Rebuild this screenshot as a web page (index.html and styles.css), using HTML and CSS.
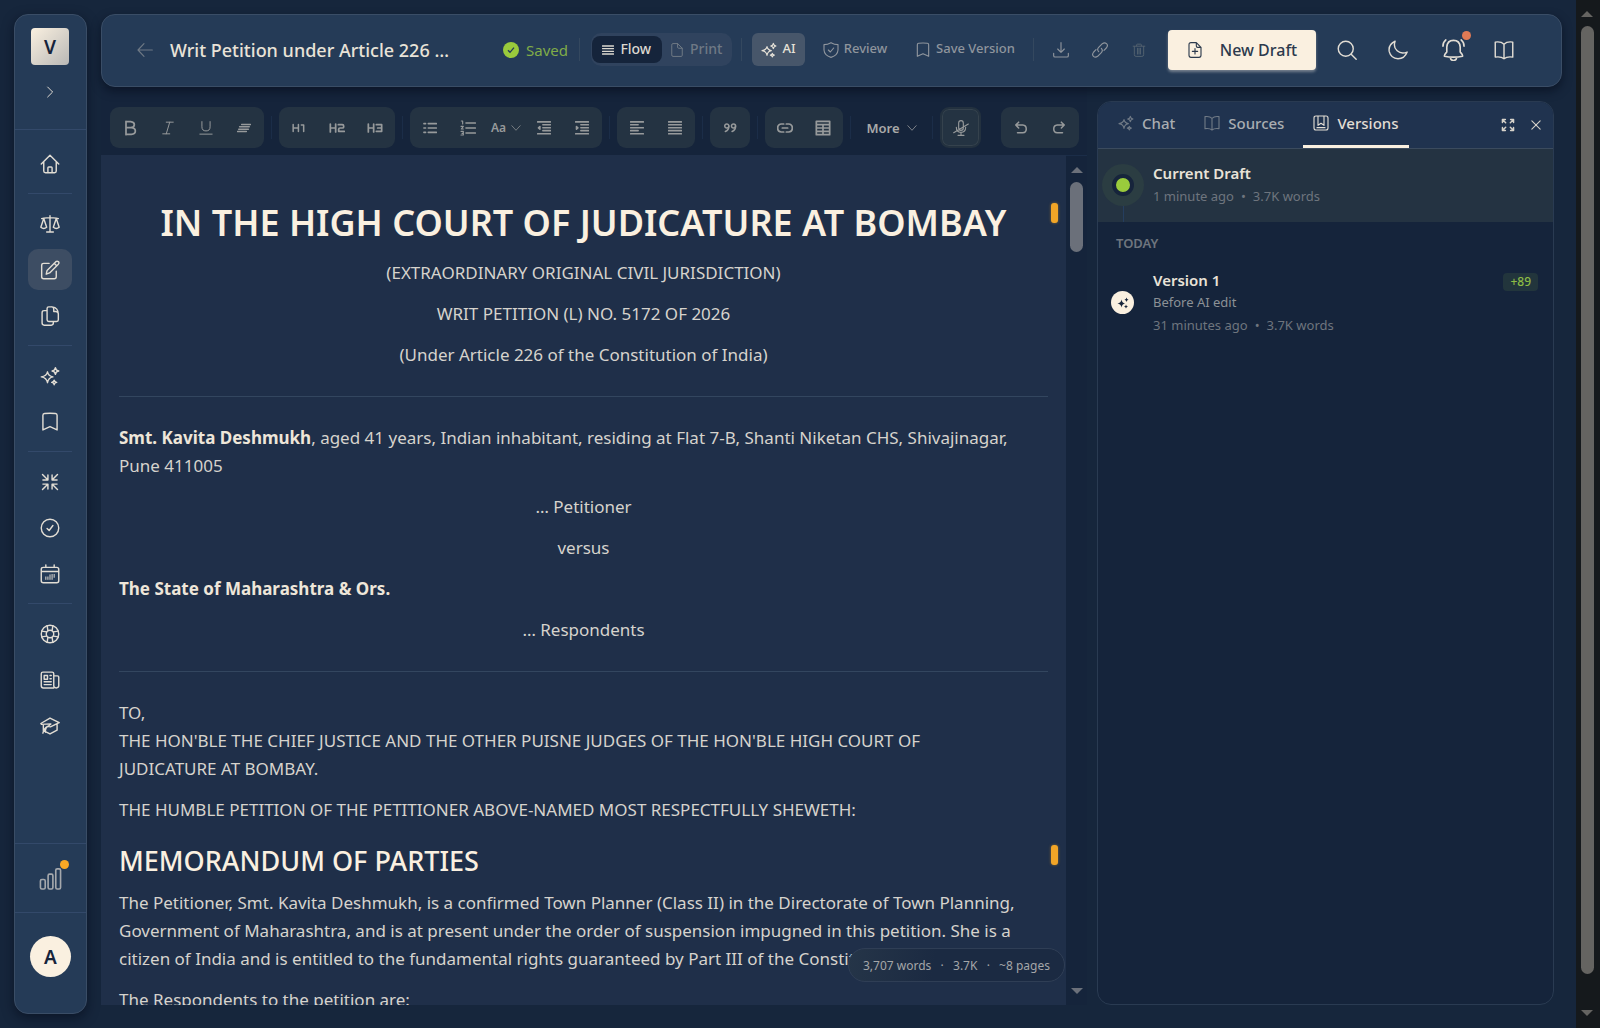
FILE: index.html
```html
<!DOCTYPE html>
<html lang="en">
<head>
<meta charset="utf-8">
<meta name="viewport" content="width=device-width, initial-scale=1">
<title>Writ Petition under Article 226</title>
<link rel="stylesheet" href="styles.css">
</head>
<body>
<svg class="sprite" aria-hidden="true">
  <symbol id="i-home" viewBox="0 0 24 24"><path d="M1.5 12 12 1.500 22.500 12M4.500 9.500V20.500Q4.500 22.500 6.500 22.500H17.500Q19.500 22.500 19.500 20.500V9.500M9.500 22V16.500Q9.500 15.500 10.500 15.500H13.500Q14.500 15.500 14.500 16.500V22"/></symbol>
  <symbol id="i-scale" viewBox="0 0 24 24"><path d="M12 2V21M8 21.500H16M2 5.500C6 4 9 5 12 4.500C15 5 18 4 22 5.500M4.500 5.500 1 16Q4.500 19 8 16ZM19.500 5.500 16 16Q19.500 19 23 16Z"/></symbol>
  <symbol id="i-edit" viewBox="0 0 24 24"><path d="M11 4H4.500Q2 4 2 6.500V20Q2 22.500 4.500 22.500H17Q19.500 22.500 19.500 20V13.500M7.500 17 8.500 12.500 19 2Q20.500 .800 22 2T22 5L11.500 15.500ZM17 4 20 7"/></symbol>
  <symbol id="i-docs" viewBox="0 0 24 24"><path d="M8.500 5.500H5Q2.500 5.500 2.500 8V20.500Q2.500 23 5 23H13.500Q16 23 16 20.500V18.500M8.500 3Q8.500 1 10.500 1H14.500Q22 2 22 10V16.500Q22 18.500 20 18.500H10.500Q8.500 18.500 8.500 16.500ZM14.500 1Q16.500 1.500 16.500 4V6.500H19Q21.500 6.500 22 9"/></symbol>
  <symbol id="i-spark" viewBox="0 0 24 24"><path d="M9 7Q10 12 15.500 13Q10 14 9 20Q8 14 1.500 13Q8 12 9 7ZM18.500 2Q19 5.500 22.500 6Q19 6.500 18.500 10Q18 6.500 14.500 6Q18 5.500 18.500 2ZM17 17Q17.300 19.200 20 19.700Q17.300 20.200 17 22.500Q16.700 20.200 14 19.700Q16.700 19.200 17 17Z"/></symbol>
  <symbol id="i-bookmark" viewBox="0 0 24 24"><path d="M3.500 21.500V4Q3.500 2 5.500 1.800 12 1.300 18.500 1.800 20.500 2 20.500 4V21.500L12 17.500Z"/></symbol>
  <symbol id="i-compress" viewBox="0 0 24 24"><path d="M3 3 9 9M9.500 3.500V9.500H3.500M21 3 15 9M14.500 3.500V9.500H20.500M3 21 9 15M9.500 20.500V14.500H3.500M21 21 15 15M14.500 20.500V14.500H20.500"/></symbol>
  <symbol id="i-expand" viewBox="0 0 24 24"><path d="M8 8 3 3M2.500 7.500V2.500H7.500M16 8 21 3M16.500 2.500H21.500V7.500M8 16 3 21M2.500 16.500V21.500H7.500M16 16 21 21M16.500 21.500H21.500V16.500"/></symbol>
  <symbol id="i-check" viewBox="0 0 24 24"><circle cx="12" cy="12" r="10.500"/><path d="M8.500 12.500 11 15 15.500 9"/></symbol>
  <symbol id="i-calendar" viewBox="0 0 24 24"><path d="M4 4H20Q22.500 4 22.500 6.500V20Q22.500 22.500 20 22.500H4Q1.500 22.500 1.500 20V6.500Q1.500 4 4 4ZM7 1V4M17 1V4M1.500 9H22.500"/><path stroke-width="1.200" d="M7 18.500V15.500M9.500 18.500V15.500M12 18.500V13M14.500 18.500V12.500M17 16V12.500"/></symbol>
  <symbol id="i-life" viewBox="0 0 24 24"><circle cx="12" cy="12" r="10.500"/><circle cx="12" cy="12" r="4.500"/><path d="M8.500 2 9.500 8M15.500 2 14.500 8M8.500 22 9.500 16M15.500 22 14.500 16M2 8.500 8 9.500M2 15.500 8 14.500M22 8.500 16 9.500M22 15.500 16 14.500"/></symbol>
  <symbol id="i-news" viewBox="0 0 24 24"><path d="M16.500 21.500H4Q1.500 21.500 1.500 19V4.500Q1.500 2.500 3.500 2.500H14.500Q16.500 2.500 16.500 4.500V19Q16.500 21.500 19.500 21.500T22.500 19V8.500Q22.500 7 21 7H16.500M5 6.500H9V11H5ZM12 6.500H13.500M12 10.500H13.500M5 14H13.500M5 17.500H13.500"/></symbol>
  <symbol id="i-cap" viewBox="0 0 24 24"><path d="M1 9 12 2.500 23 8 12.500 13 9.500 12.500 13 9.500 1.500 10M4 11V17.500L12 21.500 20.500 17V10M6.500 19.500Q6 14.500 9 12.500M3.500 20.500Q4.500 15 9 12.500"/></symbol>
  <symbol id="i-bars" viewBox="0 0 24 24"><path d="M1.500 14.500Q1.500 13 3 13H5Q6.500 13 6.500 14.500V21.500Q6.500 23 5 23H3Q1.500 23 1.500 21.500ZM9.500 9Q9.500 7.500 11 7.500H13Q14.500 7.500 14.500 9V21.500Q14.500 23 13 23H11Q9.500 23 9.500 21.500ZM17.500 3.500Q17.500 2 19 2H21Q22.500 2 22.500 3.500V21.500Q22.500 23 21 23H19Q17.500 23 17.500 21.500Z"/></symbol>
  <symbol id="i-right" viewBox="0 0 24 24"><path d="M8 3.500 16.500 12 8 20.500"/></symbol>
  <symbol id="i-down" viewBox="0 0 24 24"><path d="M2 6.500 12 17.500 22 6.500"/></symbol>
  <symbol id="i-back" viewBox="0 0 24 24"><path d="M23 12H1.500M10.500 2.500 1.500 12 10.500 21.500"/></symbol>
  <symbol id="i-lines" viewBox="0 0 24 24"><path d="M1 4H23M1 9.300H23M1 14.700H23M1 20H23"/></symbol>
  <symbol id="i-page" viewBox="0 0 24 24"><path d="M3 3Q3 1 5 1H13L21 9V21Q21 23 19 23H5Q3 23 3 21ZM13 1V7Q13 9 15 9H21"/></symbol>
  <symbol id="i-pageplus" viewBox="0 0 24 24"><path d="M3 4Q3 1 6 1H14L21 8V20Q21 23 18 23H6Q3 23 3 20ZM14 1V6Q14 8 16 8H21M12 10V18M8 14H16"/></symbol>
  <symbol id="i-shield" viewBox="0 0 24 24"><path d="M12 1Q17 4 22.500 4V12Q22 20 12 23Q2 20 1.500 12V4Q7 4 12 1ZM8 12 11 15 16 9"/></symbol>
  <symbol id="i-download" viewBox="0 0 24 24"><path d="M12 1V15.500M7 10.500 12 15.500 17 10.500M1 17V20.500Q1 22.500 3 22.500H21Q23 22.500 23 20.500V17"/></symbol>
  <symbol id="i-link" viewBox="0 0 24 24"><path d="M10 14.500Q7 11 10 8L15.500 2.500Q19 0 21.800 2.500T21.500 9L18 12.500M14 9.500Q17 13 14 16L8.500 21.500Q5 24 2.200 21.500T2.500 15L6 11.500"/></symbol>
  <symbol id="i-trash" viewBox="0 0 24 24"><path d="M2 5.500H22M8 5V3Q8 2 9 2H15Q16 2 16 3V5M4 6V20Q4 23 7 23H17Q20 23 20 20V6M9.500 9V19M14.500 9V19M12 9V19"/></symbol>
  <symbol id="i-search" viewBox="0 0 24 24"><circle cx="10.500" cy="10.500" r="9"/><path d="M17 17 23 23"/></symbol>
  <symbol id="i-moon" viewBox="0 0 24 24"><path d="M8.500 1.500Q0 5.500 1.500 14Q3.500 22 12 22.500Q20 22.500 23 14.500Q16 17.500 11 13Q6 8.500 8.500 1.500Z"/></symbol>
  <symbol id="i-bell" viewBox="0 0 24 24"><path d="M2.500 19Q2 18 5 14.500V9.500Q5.500 2.500 12 2.500T19 9.500V14.500Q22 18 21.500 19Q12 21 2.500 19ZM8.500 20Q9 23.500 12 23.500T15.500 20M4 2Q1 4.500 1 8.500M20 2Q23 4.500 23 8.500"/></symbol>
  <symbol id="i-book" viewBox="0 0 24 24"><path d="M12 5Q8.500 1.500 1.500 2.500V20.500Q8.500 19.500 12 22.500Q15.500 19.500 22.500 20.500V2.500Q15.500 1.500 12 5ZM12 5V22.500"/></symbol>
  <symbol id="i-versions" viewBox="0 0 24 24"><path d="M4.500 1.500H19.500Q22.500 1.500 22.500 4.500V19.500Q22.500 22.500 19.500 22.500H4.500Q1.500 22.500 1.500 19.500V4.500Q1.500 1.500 4.500 1.500ZM7.500 1.500V15.500L12 12.500 16.500 15.500V1.500M6 19H18"/></symbol>
  <symbol id="i-close" viewBox="0 0 24 24"><path d="M2 2 22 22M22 2 2 22"/></symbol>
  <symbol id="i-bold" viewBox="0 0 24 24"><path d="M6 2V22M6 2.500H13Q18.500 3 18.500 7T13 11.500H6H14Q20 12 20 16.500T14 21.500H6"/></symbol>
  <symbol id="i-italic" viewBox="0 0 24 24"><path d="M9 2H21M3 22H15M15 2 9 22"/></symbol>
  <symbol id="i-underline" viewBox="0 0 24 24"><path d="M5 1V10Q5 17 12 17T19 10V1M1.500 22.500H22.500"/></symbol>
  <symbol id="i-strike" viewBox="0 0 24 24"><path d="M8 6H23M4.500 10H21M3 14H19.500M1 18H16"/></symbol>
  <symbol id="i-h1" viewBox="0 0 24 24"><path d="M2 6V18M2 12H11M11 6V18M16 7H20V18"/></symbol>
  <symbol id="i-h2" viewBox="0 0 24 24"><path d="M2 6V18M2 12H10M10 6V18M14 7H20Q22 7 22 9V10.500Q22 12 20 12H16.500Q14.500 12 14.500 14V17H23"/></symbol>
  <symbol id="i-h3" viewBox="0 0 24 24"><path d="M2 6V18M2 12H10M10 6V18M14 7H22V12H16M22 12V17H14"/></symbol>
  <symbol id="i-ul" viewBox="0 0 24 24"><path d="M9 4.500H23M9 12H23M9 19.500H23M1.500 4.500H4.500M1.500 12H4.500M1.500 19.500H4.500"/></symbol>
  <symbol id="i-ol" viewBox="0 0 24 24"><path stroke-width="2.400" d="M9 4.500H23M9 12H23M9 19.500H23"/><path d="M2 1.500H4V6M1.500 9.500H5L2 13.500H5M1.500 17H5V22.500H1.500M3 20H5"/></symbol>
  <symbol id="i-outdent" viewBox="0 0 24 24"><path d="M1 1.500H23M10 6.500H23M10 11.500H23M10 16.500H23M1 22H23M5 9.500 2.500 11.800 5 14Z"/></symbol>
  <symbol id="i-indent" viewBox="0 0 24 24"><path d="M1 1.500H23M10 6.500H23M10 11.500H23M10 16.500H23M1 22H23M2.500 9.500 5 11.800 2.500 14Z"/></symbol>
  <symbol id="i-left" viewBox="0 0 24 24"><path d="M1 1.500H23M1 6.500H14M1 11.500H23M1 16.500H14M1 22H23"/></symbol>
  <symbol id="i-justify" viewBox="0 0 24 24"><path d="M1 1.500H23M1 6.500H23M1 11.500H23M1 16.500H23M1 22H23"/></symbol>
  <symbol id="i-quote" viewBox="0 0 24 24"><circle cx="6.500" cy="8.500" r="3.500"/><path d="M10 8.500Q10.500 15 4 18"/><circle cx="18" cy="8.500" r="3.500"/><path d="M21.500 8.500Q22 15 15.500 18"/></symbol>
  <symbol id="i-chain" viewBox="0 0 24 24"><path d="M10 6H6.500Q1 6.500 1 12T6.500 18H10M14 6H17.500Q23 6.500 23 12T17.500 18H14M8 12H16"/></symbol>
  <symbol id="i-table" viewBox="0 0 24 24"><path d="M2 2H22V22H2ZM2 7H22M2 12H22M2 17H22M12 7V22"/></symbol>
  <symbol id="i-mic" viewBox="0 0 24 24"><path d="M8.500 5Q8.500 1 12 1T15.500 5V12Q15.500 15.500 12 15.500T8.500 12ZM5 11Q5 18.500 12 18.500T19 11M12 18.500V23M7.500 23H16.500M1 19 23 6"/></symbol>
  <symbol id="i-undo" viewBox="0 0 24 24"><path d="M8 2 3 7 8 12M3 7H15Q21 7.500 21 13.500T15 20H6"/></symbol>
  <symbol id="i-redo" viewBox="0 0 24 24"><path d="M16 2 21 7 16 12M21 7H9Q3 7.500 3 13.500T9 20H18"/></symbol>
</svg>

<div class="app">
  <nav class="sidebar" aria-label="Main">
    <div class="side-top">
      <a class="logo" href="#">V</a>
      <button class="icon-btn" aria-label="Expand sidebar"><svg class="ic s14"><use href="#i-right"/></svg></button>
    </div>
    <div class="side-nav">
      <a class="nav-item" href="#" aria-label="Home"><svg class="ic s20"><use href="#i-home"/></svg></a>
      <hr>
      <a class="nav-item" href="#" aria-label="Cases"><svg class="ic s20"><use href="#i-scale"/></svg></a>
      <a class="nav-item active" href="#" aria-label="Drafts"><svg class="ic s20"><use href="#i-edit"/></svg></a>
      <a class="nav-item" href="#" aria-label="Documents"><svg class="ic s20"><use href="#i-docs"/></svg></a>
      <hr>
      <a class="nav-item" href="#" aria-label="Assistant"><svg class="ic s20"><use href="#i-spark"/></svg></a>
      <a class="nav-item" href="#" aria-label="Saved"><svg class="ic s20"><use href="#i-bookmark"/></svg></a>
      <hr>
      <a class="nav-item" href="#" aria-label="Condense"><svg class="ic s20"><use href="#i-compress"/></svg></a>
      <a class="nav-item" href="#" aria-label="Tasks"><svg class="ic s20"><use href="#i-check"/></svg></a>
      <a class="nav-item" href="#" aria-label="Calendar"><svg class="ic s20"><use href="#i-calendar"/></svg></a>
      <hr>
      <a class="nav-item" href="#" aria-label="Help"><svg class="ic s20"><use href="#i-life"/></svg></a>
      <a class="nav-item" href="#" aria-label="News"><svg class="ic s20"><use href="#i-news"/></svg></a>
      <a class="nav-item" href="#" aria-label="Learn"><svg class="ic s20"><use href="#i-cap"/></svg></a>
    </div>
    <div class="side-usage">
      <button class="icon-btn has-dot" aria-label="Usage"><svg class="ic s24 dim"><use href="#i-bars"/></svg><span class="dot amber"></span></button>
    </div>
    <div class="side-user"><button class="avatar">A</button></div>
  </nav>

  <main class="main">
    <header class="topbar">
      <button class="icon-btn back" aria-label="Back"><svg class="ic s16 faint"><use href="#i-back"/></svg></button>
      <h2 class="title">Writ Petition under Article 226 …</h2>
      <span class="status"><svg class="s16" viewBox="0 0 24 24"><circle cx="12" cy="12" r="12" fill="#9acb3c"/><path d="M7.500 12.500 10.500 15.500 16.500 8.500" fill="none" stroke="#243a58" stroke-width="2"/></svg>Saved</span>
      <span class="sep"></span>
      <div class="toggle">
        <button class="seg on"><svg class="ic s12 heavy"><use href="#i-lines"/></svg><span class="lbl">Flow</span></button>
        <button class="seg"><svg class="ic s14"><use href="#i-page"/></svg><span class="lbl">Print</span></button>
      </div>
      <span class="sep"></span>
      <button class="action ai"><svg class="ic s16"><use href="#i-spark"/></svg><span class="lbl">AI</span></button>
      <button class="action review"><svg class="ic s16"><use href="#i-shield"/></svg><span class="lbl">Review</span></button>
      <button class="action save"><svg class="ic s16"><use href="#i-bookmark"/></svg><span class="lbl">Save Version</span></button>
      <span class="sep"></span>
      <div class="tools">
        <button class="tool" aria-label="Download"><svg class="ic s16"><use href="#i-download"/></svg></button>
        <button class="tool" aria-label="Copy link"><svg class="ic s16"><use href="#i-link"/></svg></button>
        <button class="tool off" aria-label="Delete"><svg class="ic s14"><use href="#i-trash"/></svg></button>
      </div>
      <button class="new-draft"><svg class="ic s16"><use href="#i-pageplus"/></svg>New Draft</button>
      <div class="globals">
        <button class="icon-btn" aria-label="Search"><svg class="ic s20"><use href="#i-search"/></svg></button>
        <button class="icon-btn" aria-label="Dark mode"><svg class="ic s20"><use href="#i-moon"/></svg></button>
        <button class="icon-btn bell" aria-label="Notifications"><svg class="ic s24"><use href="#i-bell"/></svg><span class="dot coral"></span></button>
        <button class="icon-btn" aria-label="Guide"><svg class="ic s20"><use href="#i-book"/></svg></button>
      </div>
    </header>

    <div class="workspace">
      <section class="editor">
        <div class="toolbar" role="toolbar" aria-label="Formatting">
          <div class="group">
            <button aria-label="Bold"><svg class="ic s16 heavy"><use href="#i-bold"/></svg></button>
            <button aria-label="Italic"><svg class="ic s14"><use href="#i-italic"/></svg></button>
            <button aria-label="Underline"><svg class="ic s14"><use href="#i-underline"/></svg></button>
            <button aria-label="Strikethrough"><svg class="ic s14 heavy"><use href="#i-strike"/></svg></button>
          </div>
          <span class="bar"></span>
          <div class="group">
            <button aria-label="Heading 1"><svg class="ic s14 heavy"><use href="#i-h1"/></svg></button>
            <button aria-label="Heading 2"><svg class="ic s16 heavy"><use href="#i-h2"/></svg></button>
            <button aria-label="Heading 3"><svg class="ic s16 heavy"><use href="#i-h3"/></svg></button>
          </div>
          <span class="bar"></span>
          <div class="group">
            <button aria-label="Bulleted list"><svg class="ic s14 heavy"><use href="#i-ul"/></svg></button>
            <button aria-label="Numbered list"><svg class="ic s16"><use href="#i-ol"/></svg></button>
            <button class="case">Aa<svg class="ic s10"><use href="#i-down"/></svg></button>
            <button aria-label="Outdent"><svg class="ic s14 heavy"><use href="#i-outdent"/></svg></button>
            <button aria-label="Indent"><svg class="ic s14 heavy"><use href="#i-indent"/></svg></button>
          </div>
          <span class="bar"></span>
          <div class="group">
            <button aria-label="Align left"><svg class="ic s14 heavy"><use href="#i-left"/></svg></button>
            <button aria-label="Justify"><svg class="ic s14 heavy"><use href="#i-justify"/></svg></button>
          </div>
          <span class="bar"></span>
          <div class="group">
            <button aria-label="Quote"><svg class="ic s14 heavy"><use href="#i-quote"/></svg></button>
          </div>
          <span class="bar"></span>
          <div class="group">
            <button aria-label="Insert link"><svg class="ic s16 heavy"><use href="#i-chain"/></svg></button>
            <button aria-label="Insert table"><svg class="ic s16 heavy"><use href="#i-table"/></svg></button>
          </div>
          <span class="bar"></span>
          <button class="more">More<svg class="ic s10"><use href="#i-down"/></svg></button>
          <span class="bar"></span>
          <button class="mic" aria-label="Dictate"><svg class="ic s16"><use href="#i-mic"/></svg></button>
          <div class="group history">
            <button aria-label="Undo"><svg class="ic s14 heavy"><use href="#i-undo"/></svg></button>
            <button aria-label="Redo"><svg class="ic s14 heavy"><use href="#i-redo"/></svg></button>
          </div>
        </div>

        <div class="canvas">
          <article class="page">
            <h1 class="marked">IN THE HIGH COURT OF JUDICATURE AT BOMBAY<span class="marker"></span></h1>
            <p class="center">(EXTRAORDINARY ORIGINAL CIVIL JURISDICTION)</p>
            <p class="center">WRIT PETITION (L) NO. 5172 OF 2026</p>
            <p class="center">(Under Article 226 of the Constitution of India)</p>
            <hr>
            <p><strong>Smt. Kavita Deshmukh</strong>, aged 41 years, Indian inhabitant, residing at Flat 7-B, Shanti Niketan CHS, Shivajinagar,<br>Pune 411005</p>
            <p class="center">… Petitioner</p>
            <p class="center">versus</p>
            <p><strong>The State of Maharashtra &amp; Ors.</strong></p>
            <p class="center">… Respondents</p>
            <hr>
            <p>TO,<br>THE HON'BLE THE CHIEF JUSTICE AND THE OTHER PUISNE JUDGES OF THE HON'BLE HIGH COURT OF<br>JUDICATURE AT BOMBAY.</p>
            <p>THE HUMBLE PETITION OF THE PETITIONER ABOVE-NAMED MOST RESPECTFULLY SHEWETH:</p>
            <h2 class="marked">MEMORANDUM OF PARTIES<span class="marker"></span></h2>
            <p>The Petitioner, Smt. Kavita Deshmukh, is a confirmed Town Planner (Class II) in the Directorate of Town Planning,<br>Government of Maharashtra, and is at present under the order of suspension impugned in this petition. She is a<br>citizen of India and is entitled to the fundamental rights guaranteed by Part III of the Constitution of India.</p>
            <p>The Respondents to the petition are:</p>
          </article>
          <div class="scroll inner"><i class="up"></i><i class="thumb"></i><i class="down"></i></div>
          <div class="counts"><span>3,707 words</span><span>·</span><span>3.7K</span><span>·</span><span>~8 pages</span></div>
        </div>
      </section>

      <aside class="panel">
        <div class="tabs">
          <button class="tab"><svg class="ic s16"><use href="#i-spark"/></svg>Chat</button>
          <button class="tab"><svg class="ic s16"><use href="#i-book"/></svg>Sources</button>
          <button class="tab on"><svg class="ic s16"><use href="#i-versions"/></svg>Versions</button>
          <span class="grow"></span>
          <button class="panel-btn" aria-label="Expand panel"><svg class="ic s14 heavy"><use href="#i-expand"/></svg></button>
          <button class="panel-btn" aria-label="Close panel"><svg class="ic s10 heavy"><use href="#i-close"/></svg></button>
        </div>
        <div class="version current">
          <span class="rail"><span class="halo"><span class="live"></span></span></span>
          <div class="info">
            <strong>Current Draft</strong>
            <span class="meta">1 minute ago<b>•</b>3.7K words</span>
          </div>
        </div>
        <h3 class="day">TODAY</h3>
        <div class="version">
          <span class="rail"><span class="node"><svg class="s12" viewBox="0 0 24 24"><path fill="#16243b" d="M9 5Q10 12 16 13Q10 14 9 21Q8 14 1 13Q8 12 9 5ZM19 1Q19.500 5 23 5.500Q19.500 6 19 10Q18.500 6 15 5.500Q18.500 5 19 1ZM18 15Q18.500 18.500 22 19Q18.500 19.500 18 23Q17.500 19.500 14 19Q17.500 18.500 18 15Z"/></svg></span></span>
          <div class="info">
            <strong>Version 1</strong>
            <span class="note">Before AI edit</span>
            <span class="meta">31 minutes ago<b>•</b>3.7K words</span>
          </div>
          <span class="delta">+89</span>
        </div>
      </aside>
    </div>
  </main>
  <div class="scroll outer"><i class="up"></i><i class="thumb"></i><i class="down"></i></div>
</div>
</body>
</html>
```
FILE: styles.css
```css
:root {
  --cream: #faf0e0;
  --text: #d6d3cd;
  --muted: #8f959d;
  --faint: #6f7985;
  --card: #253b57;
  --line: #3a4d66;
  --page: #1f2f49;
  --deep: #15243b;
  --slate: #243342;
}
* { box-sizing: border-box; }
body {
  margin: 0;
  background: #16263c;
  color: var(--text);
  font-family: "Noto Sans", "Liberation Sans", sans-serif;
  font-size: 14px;
}
button {
  border: 0;
  padding: 0;
  background: none;
  color: inherit;
  font: inherit;
  display: flex;
  align-items: center;
  justify-content: center;
}
h1, h2, h3, p, hr { margin: 0; }
hr { border: 0; height: 1px; background: #33465f; }
a { color: inherit; text-decoration: none; }
.sprite { position: absolute; width: 0; height: 0; }
.ic { fill: none; stroke: currentColor; stroke-width: 1.7; stroke-linejoin: round; stroke-linecap: round; flex: none; }
.heavy { stroke-width: 2.6; }
.s10 { width: 10px; height: 10px; }
.s12 { width: 12px; height: 12px; }
.s14 { width: 14px; height: 14px; }
.s16 { width: 16px; height: 16px; }
.s20 { width: 20px; height: 20px; }
.s24 { width: 23px; height: 23px; }
.dim { color: #a5a8ac; }
.faint { color: var(--faint); }
.grow { flex: 1; }

.app { display: flex; height: 100vh; overflow: hidden; }

/* Sidebar */
.sidebar {
  flex: none;
  width: 73px;
  margin: 14px;
  display: flex;
  flex-direction: column;
  background: var(--card);
  border: 1px solid var(--line);
  border-radius: 14px;
  box-shadow: 0 4px 12px rgba(5, 12, 26, .6);
  color: #e2ddd4;
}
.side-top {
  height: 115px;
  padding: 13px 1px 0 0;
  display: flex;
  flex-direction: column;
  align-items: center;
  gap: 9px;
  border-bottom: 1px solid #33496a;
}
.logo {
  width: 38px;
  height: 37px;
  display: grid;
  place-items: center;
  border-radius: 4px;
  background: linear-gradient(135deg, #faf0e0, #b9b8b6);
  color: #16243b;
  font-size: 19px;
  font-weight: 600;
}
.icon-btn { width: 36px; height: 36px; position: relative; }
.side-nav {
  flex: 1;
  padding: 13px 14px 13px 13px;
  display: flex;
  flex-direction: column;
  gap: 5px;
}
.side-nav hr { flex: none; margin: 4px 0; background: #33496a; }
.nav-item { height: 41px; flex: none; display: grid; place-items: center; border-radius: 10px; }
.nav-item.active { background: #3d4d63; }
.side-usage {
  height: 70px;
  display: grid;
  place-items: center;
  border-top: 1px solid #33496a;
  border-bottom: 1px solid #33496a;
}
.dot { position: absolute; width: 9px; height: 9px; border-radius: 50%; }
.amber { right: 0; top: 0; background: #f9a825; }
.coral { right: 0; top: -1px; background: #e07a55; }
.side-user { height: 100px; padding-top: 23px; display: flex; justify-content: center; }
.avatar {
  width: 41px;
  height: 41px;
  border-radius: 50%;
  background: var(--cream);
  color: #16243b;
  font-size: 19px;
  font-weight: 600;
}

/* Header */
.main { flex: 1; min-width: 0; padding: 14px 14px 23px 0; display: flex; flex-direction: column; }
.topbar {
  flex: none;
  height: 73px;
  padding: 0 39px 2px 31px;
  display: flex;
  align-items: center;
  background: var(--card);
  border: 1px solid var(--line);
  border-radius: 14px;
  box-shadow: 0 4px 10px rgba(5, 12, 26, .6);
  position: relative;
}
.back { width: 24px; margin-right: 13px; }
.title {
  flex: 1;
  min-width: 0;
  color: #e9e3d8;
  font-size: 18px;
  line-height: 28px;
  font-weight: 500;
  white-space: nowrap;
}
.status { display: flex; align-items: center; gap: 7px; width: 67px; margin-right: 9px; color: #80ac48; font-size: 15px; }
.sep { flex: none; width: 1px; height: 23px; background: #34485f; }
.toggle {
  width: 141px;
  height: 33px;
  margin: 0 9px 0 11px;
  padding: 3px 1px;
  display: flex;
  border-radius: 10px;
  background: #30435e;
}
.seg { flex: 1; gap: 6px; font-weight: 500; font-size: 14px; color: var(--faint); border-radius: 8px; }
.seg.on { background: #15243b; color: #dcd8d0; }
.lbl { padding-bottom: 3px; }
.action { height: 33px; gap: 5px; font-size: 13px; font-weight: 500; color: var(--muted); white-space: nowrap; }
.ai { width: 53px; margin-left: 10px; border-radius: 6px; background: #47566a; color: #e6e1d7; }
.review { width: 84px; margin-left: 8px; }
.save { width: 118px; margin: 0 9px; }
.tools { display: flex; margin: 0 10px 0 7px; }
.tool { width: 39px; height: 36px; color: var(--muted); }
.off { color: #52616f; }
.new-draft {
  width: 148px;
  height: 40px;
  gap: 17px;
  border-radius: 4px;
  background: var(--cream);
  color: #2c3a4d;
  font-size: 16px;
  font-weight: 500;
  box-shadow: 0 2px 3px rgba(200, 200, 200, .5);
}
.globals { display: flex; gap: 15px; margin-left: 13px; color: #e2ddd4; }
.bell { margin-left: 4px; }

/* Workspace */
.workspace { flex: 1; min-height: 0; display: flex; gap: 10px; padding: 0 8px 0 0; }
.editor { flex: 1; min-width: 0; display: flex; flex-direction: column; background: var(--deep); }
.toolbar {
  flex: none;
  height: 68px;
  padding: 13px 8px 0 9px;
  display: flex;
  align-items: center;
  gap: 7px;
  color: #979a9b;
}
.group { display: flex; height: 41px; padding: 0 1px; border-radius: 9px; background: var(--slate); }
.group button { width: 38px; height: 41px; }
.case { gap: 5px; font-size: 12px; font-weight: 600; }
.bar { width: 1px; height: 23px; background: #1b2d48; }
.more { width: 67px; gap: 7px; font-size: 13px; font-weight: 600; color: #a9a9a8; }
.mic { width: 41px; height: 41px; border-radius: 9px; background: var(--slate); border: 2px solid #23313f; box-shadow: inset 0 0 0 1px #35424d; }
.history { margin-left: auto; }
.canvas { flex: 1; min-height: 0; display: flex; position: relative; }
.page { flex: 1; min-width: 0; overflow: hidden; padding: 46px 18px 0; background: var(--page); }
.page p { margin-bottom: 13px; font-size: 17px; line-height: 28px; white-space: nowrap; }
.page strong { color: #eee6d9; font-weight: 700; }
.page .center { text-align: center; }
.page h1 { margin-bottom: 14px; color: var(--cream); font-size: 36px; line-height: 44px; font-weight: 600; text-align: center; white-space: nowrap; }
.page h2 { margin: 20px 0 11px; color: var(--cream); font-size: 27px; line-height: 34px; font-weight: 500; }
.page hr { margin: 27px 0; }
.marked { position: relative; }
.marker {
  position: absolute;
  right: -10px;
  top: 2px;
  width: 7px;
  height: 20px;
  border-radius: 3px;
  background: #f2a527;
  box-shadow: 0 0 3px rgba(242, 165, 39, .5);
}
.page h2 .marker { top: 1px; }
.counts {
  position: absolute;
  right: 22px;
  bottom: 23px;
  width: 217px;
  height: 34px;
  display: flex;
  align-items: center;
  justify-content: space-between;
  padding: 0 14px;
  border: 1px solid #2f3e55;
  border-radius: 17px;
  background: linear-gradient(100deg, #253548, #1b2a42 40%, #1b2a42);
  color: #a4a6a8;
  font-size: 12px;
}

/* Scroll tracks */
.scroll { flex: none; display: flex; flex-direction: column; align-items: center; color: #6b707a; }
.scroll i { flex: none; }
.up { border: 6px solid transparent; border-top: 0; border-bottom: 6px solid currentColor; }
.down { border: 6px solid transparent; border-bottom: 0; border-top: 6px solid currentColor; margin-top: auto; }
.thumb { width: 13px; border-radius: 7px; background: currentColor; }
.inner { width: 21px; padding: 11px 0 11px; gap: 9px; border-top: 1px solid #1b2d48; }
.inner .thumb { height: 70px; }
.outer { width: 24px; padding: 11px 2px 12px 0; gap: 9px; background: #15191c; color: #656461; }
.outer .thumb { flex: 1; margin-bottom: 27px; }

/* Versions panel */
.panel {
  flex: none;
  width: 457px;
  margin-top: 14px;
  overflow: hidden;
  border: 1px solid #2a3b52;
  border-radius: 14px;
  background: var(--deep);
}
.tabs { height: 47px; padding: 0 3px 0 10px; display: flex; gap: 9px; background: #20334f; border-bottom: 1px solid #3b4b5e; }
.tab { height: 46px; gap: 8px; padding: 0 10px 1px; color: #a9adb1; font-size: 15px; font-weight: 500; border-bottom: 3px solid transparent; }
.tab:not(.on) svg { color: var(--faint); }
.tab.on { border-bottom-color: var(--cream); color: #e2ddd4; }
.panel-btn { width: 28px; height: 46px; color: #d6d2ca; }
.panel-btn + .panel-btn { margin-left: -9px; }
.version { display: flex; padding-right: 15px; }
.current { height: 73px; background: var(--slate); }
.rail { flex: none; width: 55px; position: relative; }
.halo {
  position: absolute;
  left: 4px;
  top: 15px;
  width: 42px;
  height: 42px;
  display: grid;
  place-items: center;
  border-radius: 50%;
  background: #2b3d42;
}
.live { width: 22px; height: 22px; border: 4px solid #16243b; border-radius: 50%; background: #9acb3c; }
.current .rail::after { content: ""; position: absolute; left: 25px; top: 57px; bottom: 0; width: 1px; background: #253e5f; }
.info { flex: 1; display: flex; flex-direction: column; }
.info strong { color: #e9e3d8; font-size: 15px; line-height: 22px; font-weight: 600; }
.meta { color: #6e757e; font-size: 13px; line-height: 24px; }
.meta b { margin: 0 7px; font-weight: 400; }
.note { color: #8c9196; font-size: 13px; line-height: 22px; }
.current .info { padding-top: 13px; }
.day { padding: 11px 18px 0; color: #6e757e; font-size: 13px; line-height: 20px; font-weight: 600; }
.day + .version { padding-top: 16px; }
.node { position: absolute; left: 13px; top: 22px; width: 23px; height: 23px; display: grid; place-items: center; border-radius: 50%; background: var(--cream); }
.delta { height: 18px; margin-top: 4px; padding: 0 7px; border-radius: 4px; background: #22353c; color: #8dbc45; font-size: 12px; line-height: 18px; font-weight: 500; }
```
